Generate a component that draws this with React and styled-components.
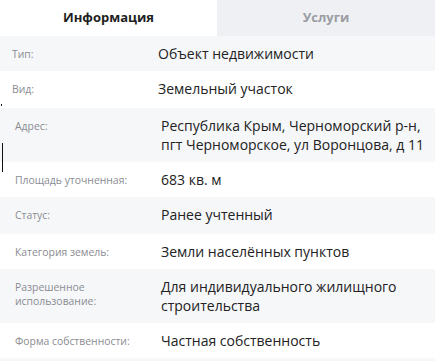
import React from "react";
import styled, { createGlobalStyle } from "styled-components";

const GlobalStyle = createGlobalStyle`
  html, body {
    margin: 0;
    padding: 0;
    background: #ffffff;
  }
  body {
    font-family: "Open Sans", "Noto Sans", sans-serif;
    color: #222222;
  }
`;

const ROWS = [
  { label: "Тип:", value: "Объект недвижимости", shifted: true },
  { label: "Вид:", value: "Земельный участок", shifted: true, tall: true },
  {
    label: "Адрес:",
    value: ["Республика Крым, Черноморский р-н,", "пгт Черноморское, ул Воронцова, д 11"],
  },
  { label: "Площадь уточненная:", value: "683 кв. м" },
  { label: "Статус:", value: "Ранее учтенный", tall: true },
  { label: "Категория земель:", value: "Земли населённых пунктов" },
  {
    label: ["Разрешенное", "использование:"],
    value: ["Для индивидуального жилищного", "строительства"],
  },
  { label: "Форма собственности:", value: "Частная собственность" },
];

const App = () => {
  return (
    <>
      <GlobalStyle />
      <Card>
        <Tabs>
          <Tab $active>Информация</Tab>
          <Tab>Услуги</Tab>
        </Tabs>
        <List>
          {ROWS.map((row, i) => (
            <Row key={i} $odd={i % 2 === 0} $shifted={row.shifted} $tall={row.tall}>
              <Label>{lines(row.label)}</Label>
              <Value>{lines(row.value)}</Value>
            </Row>
          ))}
          <Row $odd />
        </List>
        <Caret />
        <Dot />
      </Card>
    </>
  );
};

const lines = (text) =>
  Array.isArray(text)
    ? text.map((t, i) => (
        <React.Fragment key={i}>
          {t}
          {i < text.length - 1 && <br />}
        </React.Fragment>
      ))
    : text;

const Card = styled.div`
  position: relative;
  width: 435px;
  height: 361px;
  overflow: hidden;
`;

const Tabs = styled.div`
  display: flex;
  height: 36px;
`;

const Tab = styled.div`
  display: flex;
  align-items: center;
  justify-content: center;
  width: ${(p) => (p.$active ? "217px" : "auto")};
  flex: ${(p) => (p.$active ? "none" : "1")};
  background: ${(p) => (p.$active ? "#ffffff" : "#eef0f4")};
  color: ${(p) => (p.$active ? "#1f1f1f" : "#9a9ca3")};
  font-size: 13px;
  font-weight: 700;
  padding-bottom: 2px;
`;

const List = styled.div`
  display: flex;
  flex-direction: column;
`;

const Row = styled.div`
  display: grid;
  grid-template-columns: 146px 1fr;
  align-items: start;
  min-height: 19px;
  padding: 8px 0 ${(p) => (p.$tall ? "10px" : "8px")}
    ${(p) => (p.$shifted ? "12px" : "15px")};
  background: ${(p) => (p.$odd ? "#f6f7f9" : "#ffffff")};
`;

const Label = styled.div`
  font-size: 10.4px;
  line-height: 14px;
  padding-top: 3px;
  color: #8a8c92;
`;

const Value = styled.div`
  font-size: 14px;
  line-height: 19px;
  color: #222222;
  white-space: nowrap;
`;

const Caret = styled.div`
  position: absolute;
  left: 2px;
  top: 143px;
  width: 1px;
  height: 29px;
  background: #111111;
`;

const Dot = styled.div`
  position: absolute;
  left: 1px;
  top: 104px;
  width: 1px;
  height: 2px;
  background: #111111;
`;

export default App;
